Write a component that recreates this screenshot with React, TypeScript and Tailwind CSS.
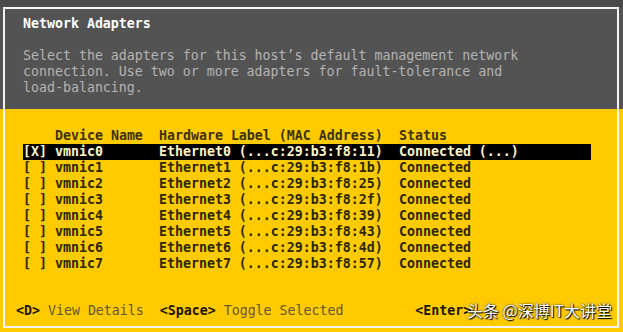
const rows = [
  ["[X]", "vmnic0", "Ethernet0 (...c:29:b3:f8:11)", "Connected (...)"],
  ["[ ]", "vmnic1", "Ethernet1 (...c:29:b3:f8:1b)", "Connected"],
  ["[ ]", "vmnic2", "Ethernet2 (...c:29:b3:f8:25)", "Connected"],
  ["[ ]", "vmnic3", "Ethernet3 (...c:29:b3:f8:2f)", "Connected"],
  ["[ ]", "vmnic4", "Ethernet4 (...c:29:b3:f8:39)", "Connected"],
  ["[ ]", "vmnic5", "Ethernet5 (...c:29:b3:f8:43)", "Connected"],
  ["[ ]", "vmnic6", "Ethernet6 (...c:29:b3:f8:4d)", "Connected"],
  ["[ ]", "vmnic7", "Ethernet7 (...c:29:b3:f8:57)", "Connected"],
];

const mono = "font-['DejaVu_Sans_Mono',monospace] text-[13.28px] leading-[16px]";

export default function App() {
  return (
    <div
      className={`relative w-[623px] h-[332px] overflow-hidden pt-[7px] pl-[3px] pr-[4px] bg-[linear-gradient(to_bottom,#4a4a4a_7px,#535353_7px,#535353_109px,#fdcb00_109px)] ${mono}`}
    >
      <div className="flex flex-col h-[321px] border-2 border-[#f4f4f4]">
        {/* grey header */}
        <div className="h-[100px] pt-[7px] pl-[18px]">
          <div className="font-bold text-white whitespace-pre">Network Adapters</div>
          <div className="mt-[16px] text-[#b4b4b4] whitespace-pre">
            <div>Select the adapters for this host’s default management network</div>
            <div>connection. Use two or more adapters for fault-tolerance and</div>
            <div>load-balancing.</div>
          </div>
        </div>

        {/* yellow list */}
        <div className="flex-1 flex flex-col pt-[19px]">
          <div className="pl-[18px] font-bold">
            <div className="flex w-[568px] whitespace-pre text-[#3d3200]">
              <span className="w-[32px]" />
              <span className="w-[104px]">Device Name</span>
              <span className="w-[240px]">Hardware Label (MAC Address)</span>
              <span className="flex-1">Status</span>
            </div>
            {rows.map((r, i) => (
              <div
                key={r[1]}
                className={`flex w-[568px] whitespace-pre ${
                  i === 0 ? "bg-black text-[#fff4c8]" : "text-[#2e2600]"
                }`}
              >
                <span className="w-[32px]">{r[0]}</span>
                <span className="w-[104px]">{r[1]}</span>
                <span className="w-[240px]">{r[2]}</span>
                <span className="flex-1">{r[3]}</span>
              </div>
            ))}
          </div>

          <div className="mt-[31px] pl-[11px] whitespace-pre">
            <span className="font-bold text-[#1a1500]">&lt;D&gt;</span>
            <span className="text-[#65582a]"> View Details  </span>
            <span className="font-bold text-[#1a1500]">&lt;Space&gt;</span>
            <span className="text-[#65582a]"> Toggle Selected         </span>
            <span className="font-bold text-[#1a1500]">&lt;Enter&gt;</span>
          </div>
        </div>
      </div>

      {/* watermark */}
      <div className="absolute left-[467px] top-[299px] whitespace-pre font-['Noto_Sans_CJK_SC',sans-serif] text-[16px] leading-[22px] text-white [text-shadow:0_0_2px_#000,1px_1px_1px_#000]">
        头条 @深博IT大讲堂
      </div>
    </div>
  );
}
